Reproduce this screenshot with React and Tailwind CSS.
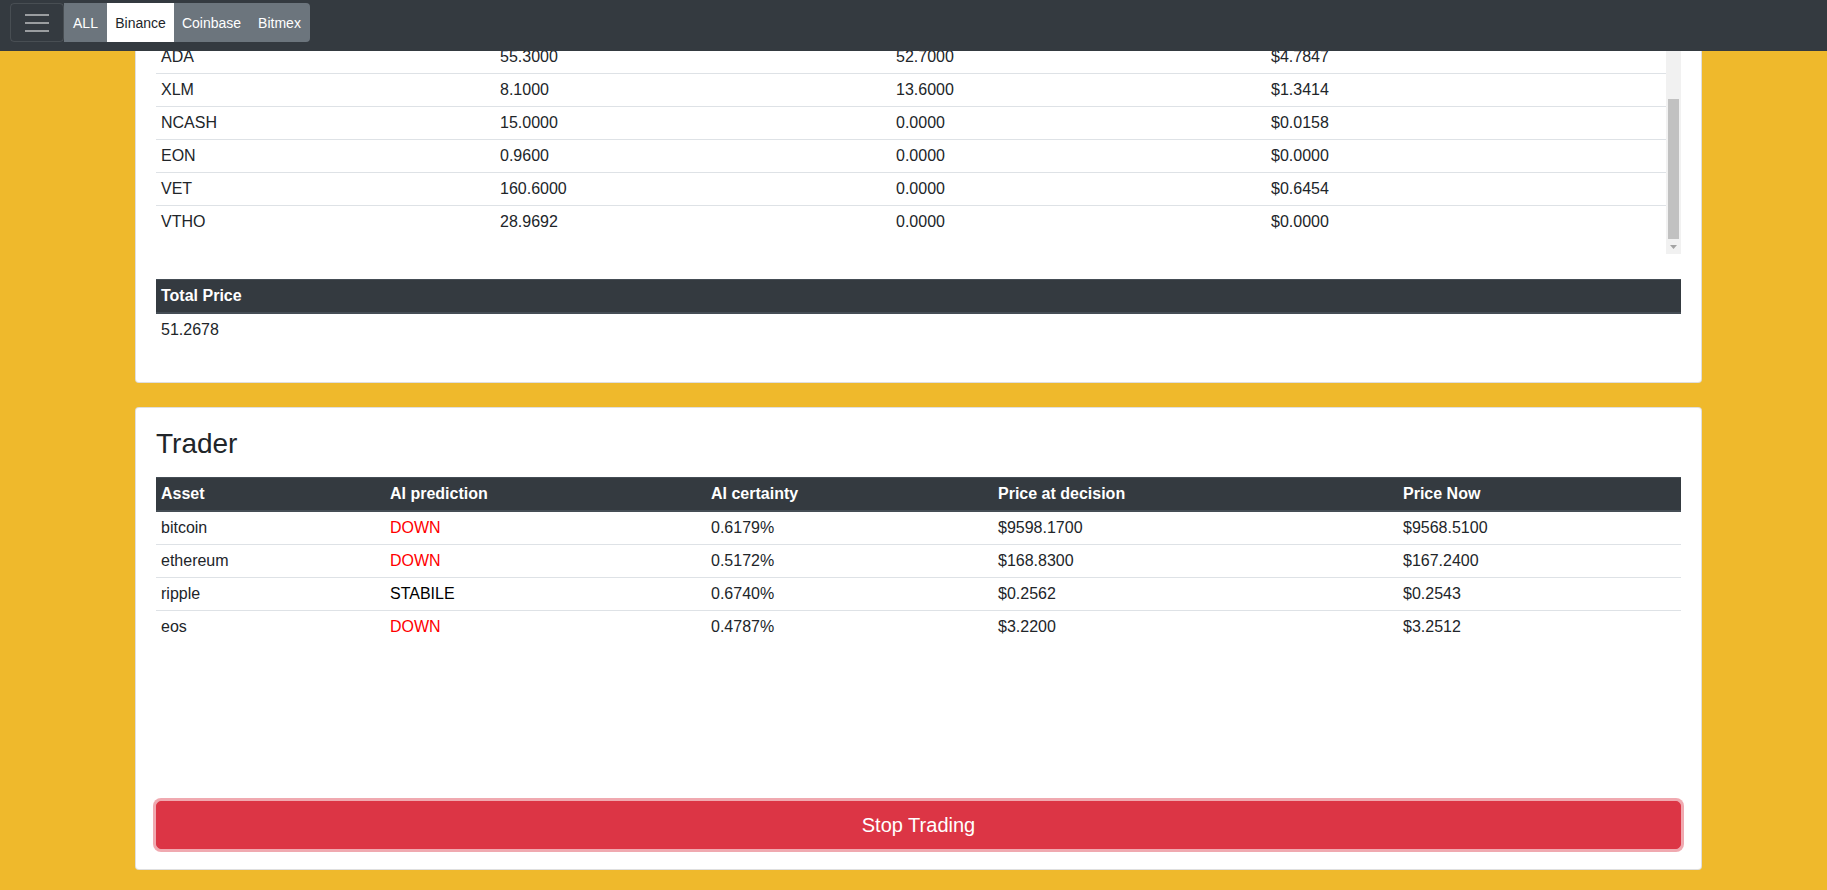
import React, { useEffect, useRef } from 'react';

const balances = [
  { coin: 'BTC', free: '0.0021', locked: '0.0000', value: '$20.0942' },
  { coin: 'ETH', free: '0.0540', locked: '0.0000', value: '$9.1166' },
  { coin: 'BNB', free: '0.4410', locked: '0.0000', value: '$9.6372' },
  { coin: 'TRX', free: '120.0000', locked: '0.0000', value: '$2.1455' },
  { coin: 'XRP', free: '8.5000', locked: '0.0000', value: '$2.1615' },
  { coin: 'ADA', free: '55.3000', locked: '52.7000', value: '$4.7847' },
  { coin: 'XLM', free: '8.1000', locked: '13.6000', value: '$1.3414' },
  { coin: 'NCASH', free: '15.0000', locked: '0.0000', value: '$0.0158' },
  { coin: 'EON', free: '0.9600', locked: '0.0000', value: '$0.0000' },
  { coin: 'VET', free: '160.6000', locked: '0.0000', value: '$0.6454' },
  { coin: 'VTHO', free: '28.9692', locked: '0.0000', value: '$0.0000' },
];

const trades = [
  { asset: 'bitcoin', prediction: 'DOWN', certainty: '0.6179%', before: '$9598.1700', now: '$9568.5100' },
  { asset: 'ethereum', prediction: 'DOWN', certainty: '0.5172%', before: '$168.8300', now: '$167.2400' },
  { asset: 'ripple', prediction: 'STABILE', certainty: '0.6740%', before: '$0.2562', now: '$0.2543' },
  { asset: 'eos', prediction: 'DOWN', certainty: '0.4787%', before: '$3.2200', now: '$3.2512' },
];

function NavBar() {
  return (
    <nav className="fixed top-0 inset-x-0 z-50 h-[51px] bg-[#343a40] flex items-start pt-[3px] pl-[10px]">
      <button
        type="button"
        className="w-[54px] h-[39px] flex items-center justify-center border border-white/10 rounded-[4px]"
        aria-label="Toggle navigation"
      >
        <svg width="30" height="30" viewBox="0 0 30 30">
          <path d="M3 7h24M3 15h24M3 23h24" stroke="rgba(255,255,255,0.5)" strokeWidth="2" />
        </svg>
      </button>
      <div className="flex h-[39px] bg-[#6c757d] rounded-r-[4px] text-[14px] text-white">
        <button type="button" className="w-[43px] flex items-center justify-center">ALL</button>
        <button type="button" className="w-[67px] flex items-center justify-center bg-white text-[#212529]">Binance</button>
        <button type="button" className="w-[75px] flex items-center justify-center">Coinbase</button>
        <button type="button" className="w-[61px] flex items-center justify-center">Bitmex</button>
      </div>
    </nav>
  );
}

// the browser hides its own scrollbar, so the bar is drawn next to the list
function ScrollBar() {
  return (
    <div className="w-[15px] shrink-0 bg-[#f1f1f1] flex flex-col justify-end items-center">
      <div className="w-[11px] h-[140px] bg-[#c1c1c1]" />
      <div className="h-[15px] flex items-center justify-center">
        <svg width="7" height="4" viewBox="0 0 7 4">
          <path d="M0 0h7L3.5 4z" fill="#a3a3a3" />
        </svg>
      </div>
    </div>
  );
}

function Portfolio() {
  const boxRef = useRef(null);

  useEffect(() => {
    if (boxRef.current) boxRef.current.scrollTop = boxRef.current.scrollHeight;
  }, []);

  return (
    <section className="bg-white border border-black/[0.125] rounded-[4px] px-5 pb-5">
      <div className="flex h-[253px]">
        <div ref={boxRef} className="flex-1 overflow-hidden">
          <table className="w-full table-fixed mb-4 text-left">
            <thead>
              <tr className="bg-[#343a40] text-white">
                <th className="w-[339px] px-[5px] py-1 border-t border-b-2 border-[#454d55] font-bold">Coin</th>
                <th className="w-[396px] px-[5px] py-1 border-t border-b-2 border-[#454d55] font-bold">Free</th>
                <th className="w-[375px] px-[5px] py-1 border-t border-b-2 border-[#454d55] font-bold">Locked</th>
                <th className="px-[5px] py-1 border-t border-b-2 border-[#454d55] font-bold">Value</th>
              </tr>
            </thead>
            <tbody>
              {balances.map((b) => (
                <tr key={b.coin} className="border-t border-[#dee2e6]">
                  <td className="px-[5px] py-1">{b.coin}</td>
                  <td className="px-[5px] py-1">{b.free}</td>
                  <td className="px-[5px] py-1">{b.locked}</td>
                  <td className="px-[5px] py-1">{b.value}</td>
                </tr>
              ))}
            </tbody>
          </table>
        </div>
        <ScrollBar />
      </div>
      <div className="h-[25px]" />
      <table className="w-full mb-4 text-left">
        <thead>
          <tr className="bg-[#343a40] text-white">
            <th className="px-[5px] py-1 border-t border-b-2 border-[#454d55] font-bold">Total Price</th>
          </tr>
        </thead>
        <tbody>
          <tr className="border-t border-[#dee2e6]">
            <td className="px-[5px] py-1">51.2678</td>
          </tr>
        </tbody>
      </table>
    </section>
  );
}

function Trader() {
  return (
    <section className="mt-6 bg-white border border-black/[0.125] rounded-[4px] px-5 pt-[19px] pb-5">
      <h3 className="h-[34px] mb-4 text-[28px] leading-[1.2] font-normal">Trader</h3>
      <div className="h-[324px]">
        <table className="w-full table-fixed text-left">
          <thead>
            <tr className="bg-[#343a40] text-white">
              <th className="w-[229px] px-[5px] py-1 border-t border-b-2 border-[#454d55] font-bold">Asset</th>
              <th className="w-[321px] px-[5px] py-1 border-t border-b-2 border-[#454d55] font-bold">AI prediction</th>
              <th className="w-[287px] px-[5px] py-1 border-t border-b-2 border-[#454d55] font-bold">AI certainty</th>
              <th className="w-[405px] px-[5px] py-1 border-t border-b-2 border-[#454d55] font-bold">Price at decision</th>
              <th className="px-[5px] py-1 border-t border-b-2 border-[#454d55] font-bold">Price Now</th>
            </tr>
          </thead>
          <tbody>
            {trades.map((t) => (
              <tr key={t.asset} className="border-t border-[#dee2e6]">
                <td className="px-[5px] py-1">{t.asset}</td>
                <td className={t.prediction === 'DOWN' ? 'px-[5px] py-1 text-[#ff0000]' : 'px-[5px] py-1 text-black'}>
                  {t.prediction}
                </td>
                <td className="px-[5px] py-1">{t.certainty}</td>
                <td className="px-[5px] py-1">{t.before}</td>
                <td className="px-[5px] py-1">{t.now}</td>
              </tr>
            ))}
          </tbody>
        </table>
      </div>
      <button
        type="button"
        className="w-full h-12 bg-[#dc3545] border border-[#dc3545] rounded-[5px] text-white text-[20px] ring-[3px] ring-[rgba(225,83,97,0.5)]"
      >
        Stop Trading
      </button>
    </section>
  );
}

export default function App() {
  return (
    <main className="min-h-screen bg-[#efb92c] font-['Liberation_Sans',Arial,sans-serif] text-[16px] leading-6 text-[#212529]">
      <NavBar />
      <div className="w-[1567px] ml-[135px]">
        <Portfolio />
        <Trader />
      </div>
    </main>
  );
}
